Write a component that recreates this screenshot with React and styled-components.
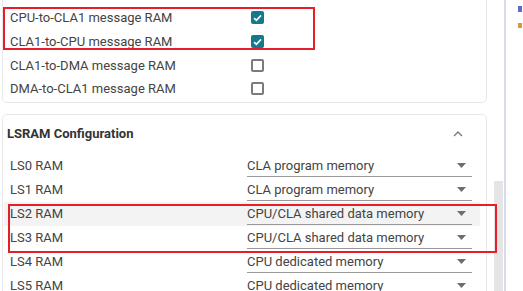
import React from "react";
import styled, { createGlobalStyle } from "styled-components";

const Global = createGlobalStyle`
  html, body { margin: 0; padding: 0; background: #ffffff; }
  body { font-family: Roboto, "Noto Sans", "Liberation Sans", sans-serif; color: #444; }
  * { box-sizing: border-box; }
`;

const Page = styled.div`
  display: flex;
  height: 291px;
  width: 523px;
  overflow: hidden;
  position: relative;
`;

const Main = styled.div`
  width: 487px;
  padding-left: 2px;
  display: flex;
  flex-direction: column;
  gap: 11px;
`;

const Card = styled.section`
  border: 1px solid #e8e8e8;
  border-radius: 5px;
  background: #fff;
  margin-top: ${(p) => p.$offset || 0}px;
  padding-top: ${(p) => p.$padTop || 0}px;
  padding-bottom: 1px;
`;

const CheckRow = styled.div`
  display: grid;
  grid-template-columns: 241px auto;
  align-items: center;
  height: ${(p) => p.$h || 24}px;
  margin: 0 6px 0 1px;
  padding-left: 6px;
  font-size: 13px;
`;

const Label = styled.span`
  font-size: 13px;
  color: #444;
  white-space: nowrap;
`;

const Box = styled.span`
  width: 13px;
  height: 13px;
  border-radius: 2px;
  display: inline-flex;
  align-items: center;
  justify-content: center;
  background: ${(p) => (p.$checked ? "#137a8b" : "#fff")};
  border: ${(p) => (p.$checked ? "none" : "2px solid #7b7b7b")};
`;

const Header = styled.div`
  display: flex;
  align-items: center;
  justify-content: space-between;
  height: 37px;
  margin-bottom: 2px;
  padding: 0 23px 0 4px;
`;

const Title = styled.h3`
  margin: 0;
  font-size: 13px;
  font-weight: 700;
  color: #333;
`;

const SelectRow = styled.div`
  display: grid;
  grid-template-columns: 237px 225px;
  align-items: center;
  height: 24px;
  margin: 0 6px 0 1px;
  padding-left: 6px;
  background: ${(p) => (p.$hover ? "#f3f3f3" : "transparent")};
`;

const Select = styled.div`
  height: 21px;
  display: flex;
  align-items: center;
  justify-content: space-between;
  padding-right: 6px;
  border-bottom: 1px solid #9a9a9a;
  font-size: 13px;
  color: #444;
  white-space: nowrap;
  margin-top: 1px;
`;

const Track = styled.div`
  width: 9px;
  margin-left: 7px;
  display: flex;
  flex-direction: column;
`;

const Thumb = styled.div`
  margin-top: 181px;
  flex: 1;
  background: #e5e5e5;
`;

const Divider = styled.div`
  width: 2px;
  margin-left: 1px;
  background: #d9dce8;
`;

const Side = styled.div`
  flex: 1;
  padding: 6px 0 0 12px;
  display: flex;
  flex-direction: column;
  gap: 11px;
`;

const Mark = styled.span`
  display: block;
  width: ${(p) => p.$w}px;
  height: ${(p) => p.$h}px;
  background: ${(p) => p.$c};
`;

const Annotation = styled.div`
  position: absolute;
  border: 2px solid #e3202a;
  pointer-events: none;
`;

const Check = () => (
  <svg width="9" height="8" viewBox="0 0 9 8">
    <path d="M1 4.2 L3.4 6.4 L8 1.4" fill="none" stroke="#fff" strokeWidth="1.6" />
  </svg>
);

const Caret = () => (
  <svg width="9" height="5" viewBox="0 0 9 5">
    <path d="M0 0 H9 L4.5 5 Z" fill="#6e6e6e" />
  </svg>
);

const ChevronUp = () => (
  <svg width="10" height="7" viewBox="0 0 10 7">
    <path d="M1 6 L5 2 L9 6" fill="none" stroke="#7a7a7a" strokeWidth="1.4" />
  </svg>
);

const msgRows = [
  { label: "CPU-to-CLA1 message RAM", checked: true },
  { label: "CLA1-to-CPU message RAM", checked: true },
  { label: "CLA1-to-DMA message RAM", checked: false },
  { label: "DMA-to-CLA1 message RAM", checked: false },
];

const lsRows = [
  { label: "LS0 RAM", value: "CLA program memory" },
  { label: "LS1 RAM", value: "CLA program memory" },
  { label: "LS2 RAM", value: "CPU/CLA shared data memory", hover: true },
  { label: "LS3 RAM", value: "CPU/CLA shared data memory" },
  { label: "LS4 RAM", value: "CPU dedicated memory" },
  { label: "LS5 RAM", value: "CPU dedicated memory" },
];

export default function App() {
  return (
    <>
      <Global />
      <Page>
        <Main>
          <Card $offset={-10} $padTop={15}>
            {msgRows.map((r) => (
              <CheckRow key={r.label} $h={23.7}>
                <Label>{r.label}</Label>
                <Box $checked={r.checked}>{r.checked && <Check />}</Box>
              </CheckRow>
            ))}
          </Card>
          <Card>
            <Header>
              <Title>LSRAM Configuration</Title>
              <ChevronUp />
            </Header>
            {lsRows.map((r) => (
              <SelectRow key={r.label} $hover={r.hover}>
                <Label>{r.label}</Label>
                <Select>
                  <span>{r.value}</span>
                  <Caret />
                </Select>
              </SelectRow>
            ))}
          </Card>
        </Main>
        <Track>
          <Thumb />
        </Track>
        <Divider />
        <Side>
          <Mark $w={4} $h={6} $c="#5a6fc4" />
          <Mark $w={4} $h={5} $c="#d9963a" />
        </Side>
        <Annotation style={{ left: 3, top: 7, width: 312, height: 43 }} />
        <Annotation style={{ left: 8, top: 204, width: 489, height: 49 }} />
      </Page>
    </>
  );
}
